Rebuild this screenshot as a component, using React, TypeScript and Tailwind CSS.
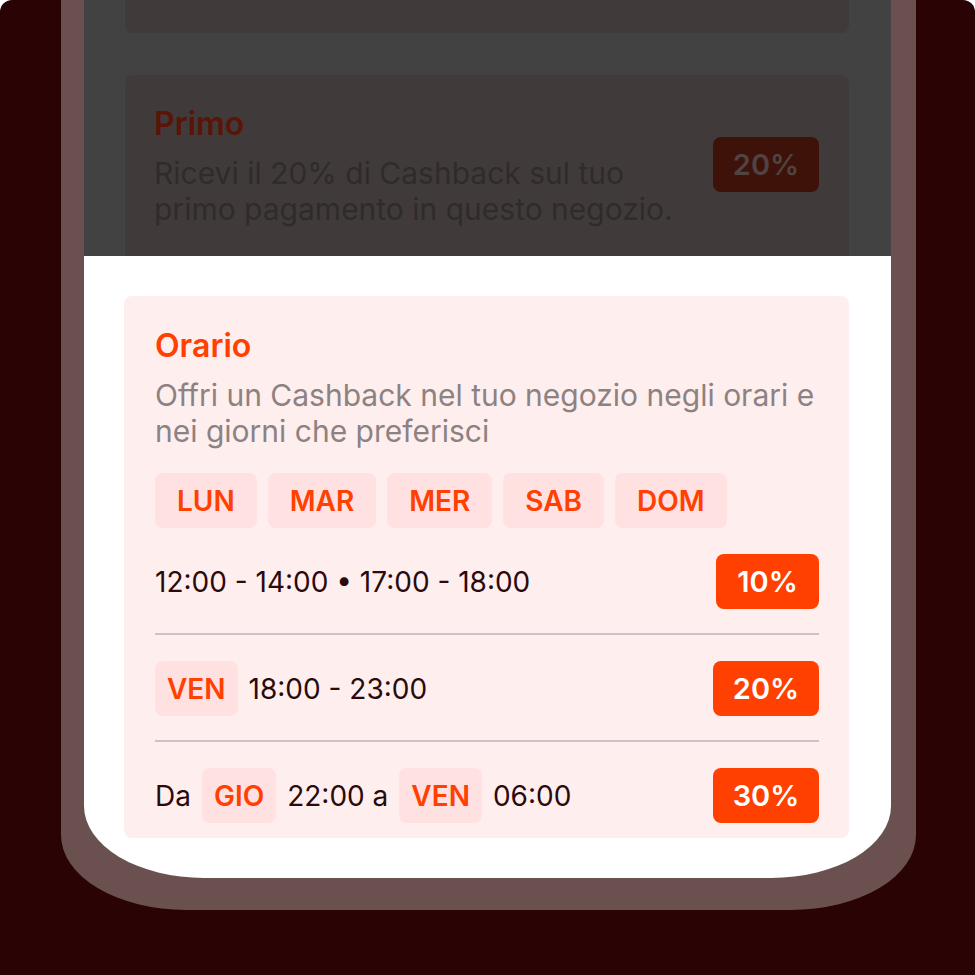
import React from 'react'

const DayChip: React.FC<{ label: string; wide?: boolean }> = ({ label, wide }) => (
  <span
    className={`flex h-[55px] items-center rounded-lg bg-[#ffe1e1] text-[28px] font-semibold text-[#ff4000] ${
      wide ? 'px-[22px]' : 'px-[12px]'
    }`}
  >
    {label}
  </span>
)

const Badge: React.FC<{ value: string; w: string }> = ({ value, w }) => (
  <span
    className={`flex h-[55px] ${w} items-center justify-center rounded-lg bg-[#ff4000] text-[29px] font-semibold text-white`}
  >
    {value}
  </span>
)

const App: React.FC = () => {
  return (
    <div className="h-[975px] w-[975px] bg-white" style={{ fontFamily: 'Inter, "Noto Sans", sans-serif' }}>
      <div className="h-full overflow-hidden rounded-t-[12px] bg-[#2a0404] pl-[61px]">
        {/* phone frame */}
        <div className="h-[910px] w-[855px] rounded-b-[125px_75px] bg-[#6b5050] pb-[32px] pl-[23px] pr-[25px]">
          <div className="flex h-full flex-col overflow-hidden rounded-b-[120px_72px] bg-white">
            {/* dimmed part */}
            <div className="h-[256px] shrink-0 overflow-hidden bg-[#424242] pl-[41px] pr-[42px]">
              <div className="h-[33px] rounded-b-lg bg-[#403b3a]" />
              <div className="mt-[42px] flex h-[220px] items-start justify-between rounded-lg bg-[#403b3a] pl-[29px] pr-[30px] pt-[31px]">
                <div>
                  <div className="text-[32px] font-semibold leading-[36px] text-[#5a1408]">Primo</div>
                  <div className="mt-[13px] text-[30px] leading-[36px] text-[#2f2b2b]">
                    Ricevi il 20% di Cashback sul tuo
                    <br />
                    primo pagamento in questo negozio.
                  </div>
                </div>
                <span className="mt-[31px] flex h-[55px] w-[106px] items-center justify-center rounded-lg bg-[#3e1208] text-[29px] font-semibold text-[#4f4442]">
                  20%
                </span>
              </div>
            </div>

            {/* highlighted part */}
            <div className="pl-[40px] pr-[42px] pt-[40px]">
              <div className="rounded-lg bg-[#ffeeee] pb-[15px] pl-[31px] pr-[30px] pt-[32px]">
                <div className="text-[32px] font-semibold leading-[36px] text-[#ff4000]">Orario</div>
                <div className="mt-[13px] text-[30px] leading-[36px] text-[#8c8282]">
                  Offri un Cashback nel tuo negozio negli orari e
                  <br />
                  nei giorni che preferisci
                </div>

                <div className="mt-[24px] flex gap-[11px]">
                  <DayChip label="LUN" wide />
                  <DayChip label="MAR" wide />
                  <DayChip label="MER" wide />
                  <DayChip label="SAB" wide />
                  <DayChip label="DOM" wide />
                </div>

                <div className="mt-[26px] flex items-center justify-between text-[28px] text-[#2a0a0a]">
                  <span>12:00 - 14:00 • 17:00 - 18:00</span>
                  <Badge value="10%" w="w-[103px]" />
                </div>

                <div className="mb-[26px] mt-[24px] h-[2px] bg-[#cbc3c3]" />

                <div className="flex items-center justify-between text-[28px] text-[#2a0a0a]">
                  <div className="flex items-center gap-[11px]">
                    <DayChip label="VEN" />
                    <span>18:00 - 23:00</span>
                  </div>
                  <Badge value="20%" w="w-[106px]" />
                </div>

                <div className="mb-[26px] mt-[24px] h-[2px] bg-[#cbc3c3]" />

                <div className="flex items-center justify-between text-[28px] text-[#2a0a0a]">
                  <div className="flex items-center gap-[11px]">
                    <span>Da</span>
                    <DayChip label="GIO" />
                    <span>22:00 a</span>
                    <DayChip label="VEN" />
                    <span>06:00</span>
                  </div>
                  <Badge value="30%" w="w-[106px]" />
                </div>
              </div>
            </div>
          </div>
        </div>
      </div>
    </div>
  )
}

export default App
